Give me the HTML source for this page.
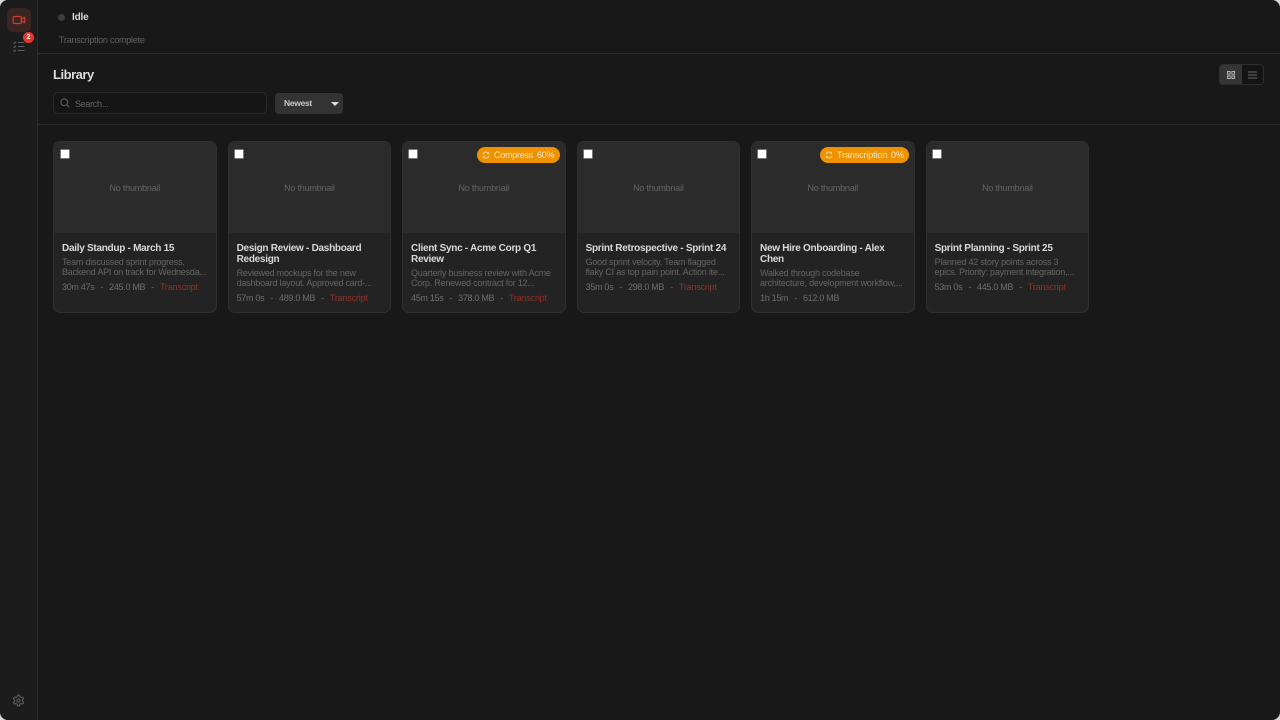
<!DOCTYPE html>
<html><head><meta charset="utf-8"><style>
*{box-sizing:border-box;margin:0;padding:0}
html,body{width:1280px;height:720px;overflow:hidden;background:#d8d8d8}
body{font-family:"Liberation Sans",sans-serif;position:relative}
#app{position:absolute;inset:0;background:#181818;border-radius:8px;overflow:hidden}
.abs{position:absolute;white-space:nowrap}
.side{left:0;top:0;width:38px;height:720px;background:#1c1c1c;border-right:1px solid #2c2c2c}
.hr{height:1px;background:#2c2c2c;left:38px;right:0}
.card{position:absolute;top:141px;width:163.6px;height:172px;background:#232323;border:1px solid #303030;border-radius:7px;overflow:hidden}
.th{position:absolute;left:0;top:0;right:0;height:91px;background:#2b2b2b}
.nt{position:absolute;left:0;right:0;top:41px;text-align:center;font-size:9px;line-height:11px;color:#656565;letter-spacing:-.2px}
.cb{position:absolute;left:5.3px;top:7px;width:10px;height:10px;background:#fff;border:1px solid #777;border-radius:1.5px}
.t{position:absolute;left:8px;top:100.5px;width:150px;font-size:10px;line-height:11.5px;font-weight:bold;color:#d9d9d9;letter-spacing:-.28px;white-space:nowrap}
.d{position:absolute;left:8px;width:150px;font-size:9px;line-height:10.5px;color:#656565;letter-spacing:-.21px;white-space:nowrap}
.m{position:absolute;left:8px;display:flex;gap:6px;font-size:9px;line-height:11px;color:#6e6e6e;letter-spacing:-.3px;white-space:pre}
.m b{font-weight:normal;color:#8f3229;letter-spacing:-.18px}
.pill{position:absolute;top:5px;height:16px;background:#ee9200;border-radius:8px;color:#f6e6cc;font-size:9px;line-height:16px;white-space:pre}
.pill svg{position:absolute;left:5px;top:4px}
.pill span{position:absolute;top:0}
</style></head><body><div id="app">
<div class="abs side"></div>
<div class="abs" style="left:7px;top:8px;width:24px;height:24px;border-radius:6px;background:#3a2522"></div>
<svg class="abs" style="left:12px;top:13px" width="14" height="14" viewBox="0 0 24 24" fill="none" stroke="#c8402f" stroke-width="2" stroke-linecap="round" stroke-linejoin="round"><path d="m16 13 5.223 3.482a.5.5 0 0 0 .777-.416V7.87a.5.5 0 0 0-.752-.432L16 10.5"/><rect x="2" y="6" width="14" height="12" rx="2"/></svg>
<svg class="abs" style="left:13px;top:41px" width="12" height="11" viewBox="0 0 12 11" fill="none" stroke="#5e5e5e" stroke-width="1"><path d="M5 1.5H11.5M5 5.5H11.5M5 9.5H11.5M.5 1.5l1 1 1.6-1.8M.5 5.5l1 1 1.6-1.8M.5 9.5l1 1 1.6-1.8"/></svg>
<div class="abs" style="left:23px;top:32px;width:11px;height:11px;border-radius:50%;background:#e5392f;color:#fff;font-size:7px;font-weight:bold;line-height:11px;text-align:center">2</div>
<svg class="abs" style="left:12px;top:694px" width="13" height="13" viewBox="0 0 24 24" fill="none" stroke="#5e5e5e" stroke-width="2" stroke-linecap="round" stroke-linejoin="round"><path d="M12.22 2h-.44a2 2 0 0 0-2 2v.18a2 2 0 0 1-1 1.73l-.43.25a2 2 0 0 1-2 0l-.15-.08a2 2 0 0 0-2.73.73l-.22.38a2 2 0 0 0 .73 2.73l.15.1a2 2 0 0 1 1 1.72v.51a2 2 0 0 1-1 1.74l-.15.09a2 2 0 0 0-.73 2.73l.22.38a2 2 0 0 0 2.73.73l.15-.08a2 2 0 0 1 2 0l.43.25a2 2 0 0 1 1 1.73V20a2 2 0 0 0 2 2h.44a2 2 0 0 0 2-2v-.18a2 2 0 0 1 1-1.73l.43-.25a2 2 0 0 1 2 0l.15.08a2 2 0 0 0 2.73-.73l.22-.39a2 2 0 0 0-.73-2.73l-.15-.08a2 2 0 0 1-1-1.74v-.5a2 2 0 0 1 1-1.74l.15-.09a2 2 0 0 0 .73-2.73l-.22-.38a2 2 0 0 0-2.73-.73l-.15.08a2 2 0 0 1-2 0l-.43-.25a2 2 0 0 1-1-1.73V4a2 2 0 0 0-2-2z"/><circle cx="12" cy="12" r="3"/></svg>

<div class="abs" style="left:58px;top:14px;width:7px;height:7px;border-radius:50%;background:#3d3d3d"></div>
<div class="abs" style="left:72px;top:11px;font-size:10px;line-height:13px;font-weight:bold;color:#d9d9d9;letter-spacing:-.2px">Idle</div>
<div class="abs" style="left:59px;top:34px;font-size:9px;line-height:12px;color:#626262;letter-spacing:-.23px">Transcription complete</div>
<div class="abs hr" style="top:53px"></div>
<div class="abs" style="left:53px;top:67px;font-size:13px;line-height:16px;font-weight:bold;color:#dcdcdc;letter-spacing:-.47px">Library</div>

<div class="abs" style="left:53px;top:92px;width:214px;height:22px;background:#151515;border:1px solid #2a2a2a;border-radius:5px"></div>
<svg class="abs" style="left:60px;top:98px" width="10" height="10" viewBox="0 0 10 10" fill="none" stroke="#626262" stroke-width="1"><circle cx="4.3" cy="4.3" r="3.4"/><path d="M6.8 6.8 9.3 9.3"/></svg>
<div class="abs" style="left:75px;top:98.5px;font-size:9px;line-height:11px;color:#626262;letter-spacing:-.3px">Search...</div>
<div class="abs" style="left:275px;top:93px;width:68px;height:21px;background:#333;border-radius:4px"></div>
<div class="abs" style="left:284px;top:98px;font-size:8.5px;line-height:11px;font-weight:bold;color:#c8c8c8;letter-spacing:-.3px">Newest</div>
<div class="abs" style="left:331px;top:102px;width:0;height:0;border-left:4px solid transparent;border-right:4px solid transparent;border-top:4px solid #ddd"></div>

<div class="abs" style="left:1219px;top:64px;width:45px;height:21px;background:#141414;border:1px solid #2e2e2e;border-radius:4px;overflow:hidden"><div style="position:absolute;left:0;top:0;width:22px;height:19px;background:#353535"></div></div>
<svg class="abs" style="left:1227px;top:71px" width="8" height="8" viewBox="0 0 8 8" fill="none" stroke="#c4c4c4" stroke-width=".9"><rect x=".5" y=".5" width="2.6" height="2.6"/><rect x="4.9" y=".5" width="2.6" height="2.6"/><rect x=".5" y="4.9" width="2.6" height="2.6"/><rect x="4.9" y="4.9" width="2.6" height="2.6"/></svg>
<svg class="abs" style="left:1248px;top:71px" width="9" height="8" viewBox="0 0 9 8" fill="none" stroke="#6a6a6a" stroke-width="1"><path d="M0 1H9M0 4H9M0 7H9"/></svg>
<div class="abs hr" style="top:124px"></div>

<div class="card" style="left:53px"><div class="th"></div><div class="nt">No thumbnail</div><div class="cb" style="left:6px"></div>
<div class="t">Daily Standup - March 15</div>
<div class="d" style="top:114.8px">Team discussed sprint progress.<br>Backend API on track for Wednesda...</div>
<div class="m" style="top:140px"><span>30m 47s</span><span>-</span><span>245.0 MB</span><span>-</span><b>Transcript</b></div></div>

<div class="card" style="left:227.6px"><div class="th"></div><div class="nt">No thumbnail</div><div class="cb"></div>
<div class="t">Design Review - Dashboard<br>Redesign</div>
<div class="d" style="top:125.8px">Reviewed mockups for the new<br>dashboard layout. Approved card-...</div>
<div class="m" style="top:151px"><span>57m 0s</span><span>-</span><span>489.0 MB</span><span>-</span><b>Transcript</b></div></div>

<div class="card" style="left:402px"><div class="th"></div><div class="nt">No thumbnail</div><div class="cb"></div>
<div class="pill" style="left:74px;width:83px"><svg width="8" height="8" viewBox="0 0 8 8" fill="none" stroke="#f6d9a6" stroke-width=".9"><path d="M1 3.4A3 3 0 0 1 6.4 2.2M7 4.6A3 3 0 0 1 1.6 5.8M6.6 .8V2.4H5M1.4 7.2V5.6H3"/></svg><span style="left:17px;letter-spacing:-.25px">Compress</span><span style="left:60px;letter-spacing:-.2px">60%</span></div>
<div class="t">Client Sync - Acme Corp Q1<br>Review</div>
<div class="d" style="top:125.8px">Quarterly business review with Acme<br>Corp. Renewed contract for 12...</div>
<div class="m" style="top:151px"><span>45m 15s</span><span>-</span><span>378.0 MB</span><span>-</span><b>Transcript</b></div></div>

<div class="card" style="left:576.6px"><div class="th"></div><div class="nt">No thumbnail</div><div class="cb"></div>
<div class="t">Sprint Retrospective - Sprint 24</div>
<div class="d" style="top:114.8px">Good sprint velocity. Team flagged<br>flaky CI as top pain point. Action ite...</div>
<div class="m" style="top:140px"><span>35m 0s</span><span>-</span><span>298.0 MB</span><span>-</span><b>Transcript</b></div></div>

<div class="card" style="left:751px"><div class="th"></div><div class="nt">No thumbnail</div><div class="cb"></div>
<div class="pill" style="left:68px;width:89px"><svg width="8" height="8" viewBox="0 0 8 8" fill="none" stroke="#f6d9a6" stroke-width=".9"><path d="M1 3.4A3 3 0 0 1 6.4 2.2M7 4.6A3 3 0 0 1 1.6 5.8M6.6 .8V2.4H5M1.4 7.2V5.6H3"/></svg><span style="left:17px;letter-spacing:-.11px">Transcription</span><span style="left:71px">0%</span></div>
<div class="t">New Hire Onboarding - Alex<br>Chen</div>
<div class="d" style="top:125.8px">Walked through codebase<br>architecture, development workflow,...</div>
<div class="m" style="top:151px"><span>1h 15m</span><span>-</span><span>612.0 MB</span></div></div>

<div class="card" style="left:925.6px"><div class="th"></div><div class="nt">No thumbnail</div><div class="cb"></div>
<div class="t">Sprint Planning - Sprint 25</div>
<div class="d" style="top:114.8px">Planned 42 story points across 3<br>epics. Priority: payment integration,...</div>
<div class="m" style="top:140px"><span>53m 0s</span><span>-</span><span>445.0 MB</span><span>-</span><b>Transcript</b></div></div>
</div></body></html>
